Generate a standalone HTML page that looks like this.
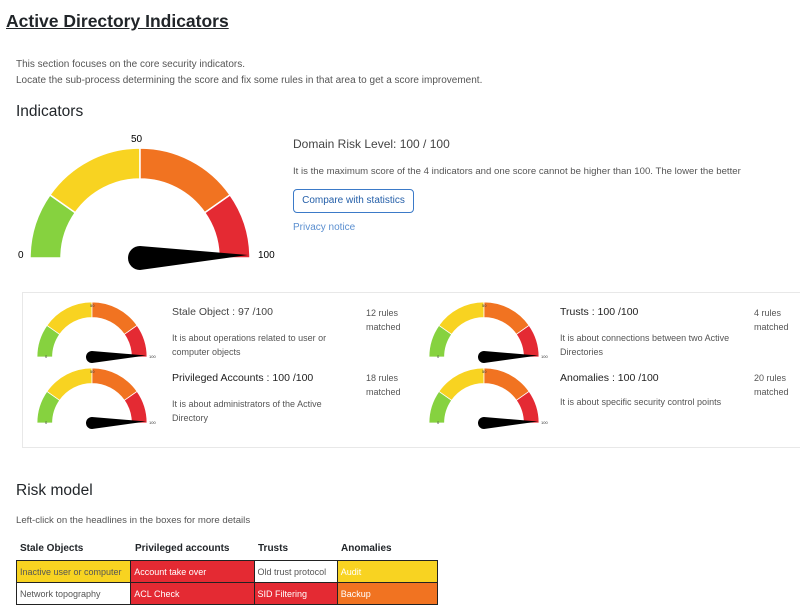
<!DOCTYPE html>
<html><head><style>
body{margin:0;width:800px;height:602px;overflow:hidden;background:#fff;font-family:"Liberation Sans",sans-serif;color:#212529;position:relative}
.a{position:absolute;white-space:nowrap}
.s{font-size:10px;color:#555}
table{border-collapse:collapse;font-size:9px;table-layout:fixed}
td{border:1px solid #222;height:21px;padding:0 3px;overflow:hidden;white-space:nowrap}
</style></head><body>
<svg width="0" height="0" style="position:absolute"><defs>
<g id="g">
<path d="M-110 0A110 110 0 0 1 -90.1 -63.1L-64.7 -45.3A79 79 0 0 0 -79 0Z" fill="#86d23f" stroke="#fff" stroke-width="1.5"/>
<path d="M-90.1 -63.1A110 110 0 0 1 0 -110L0 -79A79 79 0 0 0 -64.7 -45.3Z" fill="#f8d321" stroke="#fff" stroke-width="1.5"/>
<path d="M0 -110A110 110 0 0 1 90.1 -63.1L64.7 -45.3A79 79 0 0 0 0 -79Z" fill="#f17321" stroke="#fff" stroke-width="1.5"/>
<path d="M90.1 -63.1A110 110 0 0 1 110 0L79 0A79 79 0 0 0 64.7 -45.3Z" fill="#e42a33" stroke="#fff" stroke-width="1.5"/>
<path d="M0 -12L108 -3L0 12A12 12 0 0 1 0 -12Z" fill="#000"/>
</g></defs></svg>
<div class="a" style="left:6px;top:11px;font-size:17.5px;font-weight:bold;text-decoration:underline">Active Directory Indicators</div>
<div class="a s" style="left:16px;top:57px;line-height:16px">This section focuses on the core security indicators.<br>Locate the sub-process determining the score and fix some rules in that area to get a score improvement.</div>
<div class="a" style="left:16px;top:103px;font-size:15.5px">Indicators</div>
<svg class="a" style="left:0;top:130px" width="290" height="140">
<use href="#g" transform="translate(140,128)"/>
<text x="18" y="128" font-size="10" font-family="Liberation Sans">0</text>
<text x="131" y="12" font-size="10" font-family="Liberation Sans">50</text>
<text x="258" y="128" font-size="10" font-family="Liberation Sans">100</text>
</svg>
<div class="a" style="left:293px;top:137px;font-size:12px;color:#444">Domain Risk Level: 100 / 100</div>
<div class="a s" style="left:293px;top:166px;font-size:9.6px">It is the maximum score of the 4 indicators and one score cannot be higher than 100. The lower the better</div>
<div class="a" style="left:293px;top:189px;width:119px;height:22px;border:1px solid #3b7ac8;border-radius:4px;color:#235ea8;font-size:10px;line-height:22px;text-align:center">Compare with statistics</div>
<div class="a" style="left:293px;top:222px;font-size:10px;color:#5b8fd0">Privacy notice</div>
<div class="a" style="left:22px;top:292px;width:790px;height:154px;border:1px solid #e8e8e8"></div>
<svg class="a" style="left:0;top:290px" width="600" height="160">
<use href="#g" transform="translate(92,67) scale(0.5)"/>
<use href="#g" transform="translate(92,133) scale(0.5)"/>
<use href="#g" transform="translate(484,67) scale(0.5)"/>
<use href="#g" transform="translate(484,133) scale(0.5)"/>
<g font-size="4" font-family="Liberation Sans" fill="#333">
<text x="45" y="68">0</text><text x="90" y="17">50</text><text x="149" y="68">100</text>
<text x="45" y="134">0</text><text x="90" y="83">50</text><text x="149" y="134">100</text>
<text x="437" y="68">0</text><text x="482" y="17">50</text><text x="541" y="68">100</text>
<text x="437" y="134">0</text><text x="482" y="83">50</text><text x="541" y="134">100</text>
</g></svg>
<div class="a" style="left:172px;top:306px;font-size:10.5px;color:#444">Stale Object : 97 /100</div>
<div class="a s" style="left:172px;top:331px;font-size:9px;line-height:14px">It is about operations related to user or<br>computer objects</div>
<div class="a s" style="left:366px;top:306px;font-size:9px;line-height:14px">12 rules<br>matched</div>
<div class="a" style="left:172px;top:372px;font-size:10.5px;color:#222">Privileged Accounts : 100 /100</div>
<div class="a s" style="left:172px;top:397px;font-size:9px;line-height:14px">It is about administrators of the Active<br>Directory</div>
<div class="a s" style="left:366px;top:371px;font-size:9px;line-height:14px">18 rules<br>matched</div>
<div class="a" style="left:560px;top:306px;font-size:10.5px;color:#222">Trusts : 100 /100</div>
<div class="a s" style="left:560px;top:331px;font-size:9px;line-height:14px">It is about connections between two Active<br>Directories</div>
<div class="a s" style="left:754px;top:306px;font-size:9px;line-height:14px">4 rules<br>matched</div>
<div class="a" style="left:560px;top:372px;font-size:10.5px;color:#222">Anomalies : 100 /100</div>
<div class="a s" style="left:560px;top:397px;font-size:9px">It is about specific security control points</div>
<div class="a s" style="left:754px;top:371px;font-size:9px;line-height:14px">20 rules<br>matched</div>
<div class="a" style="left:16px;top:482px;font-size:15.5px">Risk model</div>
<div class="a s" style="left:16px;top:515px;font-size:9.6px">Left-click on the headlines in the boxes for more details</div>
<div class="a" style="left:20px;top:543px;font-size:10px;font-weight:bold">Stale Objects</div>
<div class="a" style="left:135px;top:543px;font-size:10px;font-weight:bold">Privileged accounts</div>
<div class="a" style="left:258px;top:543px;font-size:10px;font-weight:bold">Trusts</div>
<div class="a" style="left:341px;top:543px;font-size:10px;font-weight:bold">Anomalies</div>
<table class="a" style="left:16px;top:560px;width:422px">
<col style="width:114px"><col style="width:123px"><col style="width:83px"><col style="width:100px">
<tr><td style="background:#f8d321;color:#555">Inactive user or computer</td><td style="background:#e42a33;color:#fff">Account take over</td><td style="background:#fff;color:#555">Old trust protocol</td><td style="background:#f8d321;color:#fff">Audit</td></tr>
<tr><td style="background:#fff;color:#555">Network topography</td><td style="background:#e42a33;color:#fff">ACL Check</td><td style="background:#e42a33;color:#fff">SID Filtering</td><td style="background:#f17321;color:#fff">Backup</td></tr>
</table>
</body></html>
